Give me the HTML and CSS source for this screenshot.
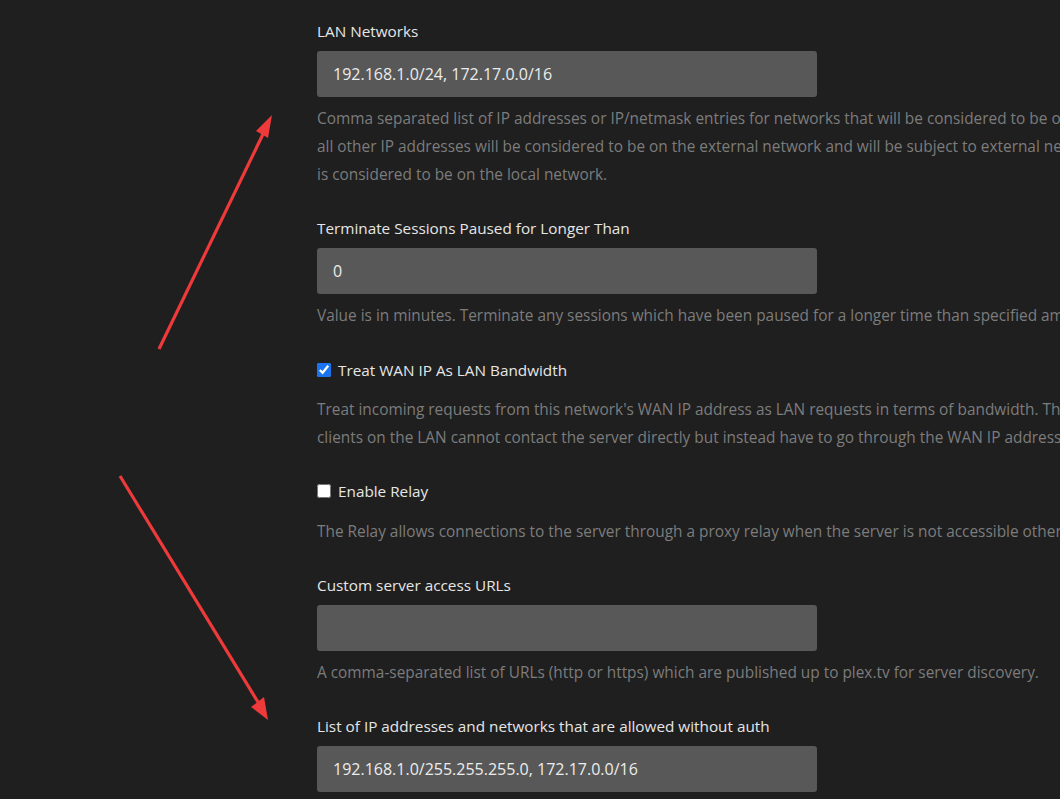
FILE: index.html
```html
<!DOCTYPE html>
<html>
<head>
<meta charset="utf-8">
<link rel="stylesheet" href="styles.css">
</head>
<body>
<div class="page">
  <div class="group">
    <div class="label">LAN Networks</div>
    <div class="input">192.168.1.0/24, 172.17.0.0/16</div>
    <p class="help">Comma separated list of IP addresses or IP/netmask entries for networks that will be considered to be on the local network when enforcing bandwidth limits. If set,<br>all other IP addresses will be considered to be on the external network and will be subject to external network bandwidth limits. If not set, only the server's subnet<br>is considered to be on the local network.</p>
  </div>
  <div class="group">
    <div class="label">Terminate Sessions Paused for Longer Than</div>
    <div class="input">0</div>
    <p class="help">Value is in minutes. Terminate any sessions which have been paused for a longer time than specified amount of time.</p>
  </div>
  <div class="group group-tight">
    <label class="check"><input type="checkbox" checked><span>Treat WAN IP As LAN Bandwidth</span></label>
    <p class="help help-check help-tight">Treat incoming requests from this network's WAN IP address as LAN requests in terms of bandwidth. This often occurs when DNS rebinding protection is in place and<br>clients on the LAN cannot contact the server directly but instead have to go through the WAN IP address.</p>
  </div>
  <div class="group">
    <label class="check"><input type="checkbox"><span>Enable Relay</span></label>
    <p class="help help-check">The Relay allows connections to the server through a proxy relay when the server is not accessible otherwise.</p>
  </div>
  <div class="group">
    <div class="label">Custom server access URLs</div>
    <div class="input"></div>
    <p class="help">A comma-separated list of URLs (http or https) which are published up to plex.tv for server discovery.</p>
  </div>
  <div class="group">
    <div class="label">List of IP addresses and networks that are allowed without auth</div>
    <div class="input">192.168.1.0/255.255.255.0, 172.17.0.0/16</div>
  </div>
</div>
<svg class="arrows" width="1060" height="799" viewBox="0 0 1060 799">
  <g stroke="#ee3a3a" stroke-width="3.2" stroke-linecap="butt" fill="none">
    <line x1="159" y1="349" x2="265" y2="130"/>
    <line x1="120" y1="476" x2="261" y2="707"/>
  </g>
  <g fill="#ee3a3a">
    <polygon points="272,115 256,131 268,138"/>
    <polygon points="268,720 251,707 264,697"/>
  </g>
</svg>
</body>
</html>
```

FILE: styles.css
```css
html, body {
  margin: 0;
  padding: 0;
  background: #1f1f1f;
  overflow: hidden;
  height: 799px;
}
body {
  font-family: "Open Sans", "Noto Sans", sans-serif;
  position: relative;
}
.page {
  padding: 21px 0 0 317px;
  width: 1500px;
}
.group {
  margin-bottom: 29px;
}
.group-tight {
  margin-bottom: 28px;
}
.label {
  font-size: 15.3px;
  line-height: 20px;
  color: #e6e6e6;
  margin-bottom: 10px;
  white-space: nowrap;
}
.input {
  box-sizing: border-box;
  width: 500px;
  height: 46px;
  background: #585858;
  border-radius: 3px;
  padding: 0 16px;
  color: #ececec;
  font-size: 16px;
  line-height: 46px;
}
.help {
  margin: 8px 0 0;
  font-size: 15.4px;
  line-height: 28px;
  color: #7c7c7c;
  white-space: nowrap;
}
.help-check {
  margin-top: 16px;
}
.help-tight {
  margin-top: 15px;
}
.check {
  display: flex;
  align-items: center;
  height: 22px;
  gap: 7px;
  font-size: 15.3px;
  color: #e6e6e6;
}
.check input {
  margin: 0;
  width: 14px;
  height: 14px;
  accent-color: #1a73f0;
}
.arrows {
  position: absolute;
  left: 0;
  top: 0;
  pointer-events: none;
}
```
